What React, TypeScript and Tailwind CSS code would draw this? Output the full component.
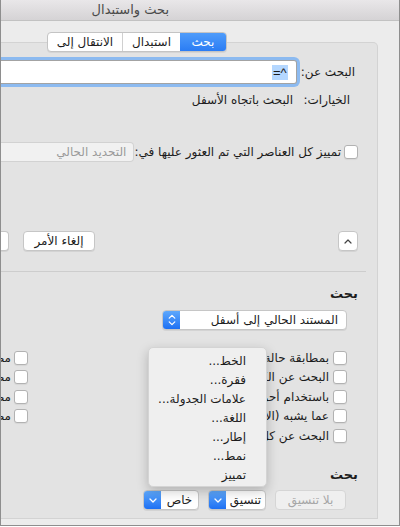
import React from 'react';

const ChevronDown = () => (
  <svg width="8" height="5" viewBox="0 0 8 5">
    <path d="M1 1l3 3 3-3" fill="none" stroke="#fff" strokeWidth="1.3" strokeLinecap="round" strokeLinejoin="round" />
  </svg>
);

const Stepper = () => (
  <svg width="8" height="12" viewBox="0 0 8 12">
    <path d="M1.2 4.2L4 1.4l2.8 2.8M1.2 7.8L4 10.6l2.8-2.8" fill="none" stroke="#fff" strokeWidth="1.2" strokeLinecap="round" strokeLinejoin="round" />
  </svg>
);

const Check = () => (
  <span className="w-[14px] h-[14px] shrink-0 rounded-[3px] border border-[#b2b2b2] bg-white shadow-[0_1px_1px_rgba(0,0,0,0.06)]" />
);

const btn = 'h-[20px] rounded-[4px] border border-[#c6c6c6] bg-white shadow-[0_1px_0_rgba(0,0,0,0.07)] flex items-center justify-center shrink-0';

interface SplitProps {
  label: string;
  width: string;
}

const SplitPopup: React.FC<SplitProps> = ({ label, width }) => (
  <div className={`${btn} ${width} overflow-hidden`}>
    <span className="flex-1 flex items-center justify-center">{label}</span>
    <span className="w-[17px] h-full bg-linear-to-b from-[#5ea8fc] to-[#1d70f3] flex items-center justify-center">
      <ChevronDown />
    </span>
  </div>
);

const rightOptions = [
  'بمطابقة حالة الأحرف',
  'البحث عن الكلمات الكاملة فقط',
  'باستخدام أحرف البدل',
  'عما يشبه (الانجليزية)',
  'البحث عن كل أشكال الكلمة (الانجليزية)',
];

const leftOptions = ['مطابقة البادئة', 'مطابقة اللاحقة', 'مطابقة علامات الترقيم', 'مطابقة المسافات'];

const menuItems = ['الخط...', 'فقرة...', 'علامات الجدولة...', 'اللغة...', 'إطار...', 'نمط...', 'تمييز'];

export default function App() {
  return (
    <div
      dir="rtl"
      className="relative w-[400px] h-[526px] overflow-hidden bg-[#ececec] border-x border-b border-[#8e8e8e] font-['DejaVu_Sans',sans-serif] text-[12px] text-[#1c1c1c]"
    >
      {/* title bar */}
      <div className="h-[21px] border-b border-[#c2c2c2] bg-linear-to-b from-[#e9e7e9] to-[#d5d3d5] flex items-center pr-[230px] text-[13px] text-[#4a4a4a] whitespace-nowrap">
        بحث واستبدال
      </div>

      {/* tabs */}
      <div className="relative z-10 mt-[11px] mr-[172px] flex h-[20px] w-fit rounded-[4px] border border-[#c4c4c4] bg-white shadow-[0_1px_0_rgba(0,0,0,0.06)] overflow-hidden">
        <span className="w-[46px] flex items-center justify-center bg-linear-to-b from-[#4f9cfa] to-[#2a7cf4] text-white">بحث</span>
        <span className="w-[58px] flex items-center justify-center border-l border-[#d0d0d0]">استبدال</span>
        <span className="w-[74px] flex items-center justify-center">الانتقال إلى</span>
      </div>

      {/* panel */}
      <div className="-mt-[10px] mr-[21px] h-[477px] rounded-tr-[5px] border-t border-r border-b border-[#d3d3d3] bg-[#e3e3e3] pt-[17px] flex flex-col">
        {/* find what */}
        <div className="flex items-center h-[24px] pr-[19px]">
          <span className="shrink-0 pr-[3px] pl-[4px] whitespace-nowrap">البحث عن:</span>
          <div className="flex-1 h-[24px] bg-white border border-l-0 border-[#a3a3a3] rounded-r-[3px] ring-3 ring-[#8cbaf0] flex items-center pr-[8px]">
            <span className="bg-[#b4d7ff] px-[1px] leading-[15px] font-['Liberation_Sans',sans-serif] text-[13px]">^=</span>
          </div>
        </div>

        {/* options */}
        <div className="flex items-center h-[16px] mt-[8px] pr-[19px] whitespace-nowrap">
          <span className="w-[65px] shrink-0 pr-[8px]">الخيارات:</span>
          <span>البحث باتجاه الأسفل</span>
        </div>

        {/* highlight all */}
        <div className="flex items-center h-[20px] mt-[34px] pr-[19px]">
          <Check />
          <span className="flex-1 pr-[3px] whitespace-nowrap">تمييز كل العناصر التي تم العثور عليها في:</span>
          <div className="w-[136px] h-[20px] shrink-0 rounded-r-[4px] border border-l-0 border-[#d2d2d2] bg-[#f1f1f1] flex items-center pr-[7px] text-[#9a9a9a] whitespace-nowrap">
            التحديد الحالي
          </div>
        </div>

        {/* buttons */}
        <div className="flex items-center h-[20px] mt-[69px] pr-[19px]">
          <div className={`${btn} w-[20px]`}>
            <svg width="8" height="5" viewBox="0 0 8 5">
              <path d="M1 4l3-3 3 3" fill="none" stroke="#444" strokeWidth="1.2" strokeLinecap="round" strokeLinejoin="round" />
            </svg>
          </div>
          <div className="flex-1" />
          <div className={`${btn} w-[72px] whitespace-nowrap`}>إلغاء الأمر</div>
          <div className={`${btn} w-[8px] ml-0 mr-[14px] rounded-l-none border-l-0`} />
        </div>

        {/* separator */}
        <div className="h-px bg-[#cdcdcd] mt-[20px] mr-[11px]" />

        <div className="h-[16px] mt-[14px] pr-[19px] font-bold text-[13px] leading-[16px]">بحث</div>

        <div className="mt-[8px] mr-[30px] w-[185px] h-[20px] rounded-[4px] border border-[#c6c6c6] bg-white shadow-[0_1px_0_rgba(0,0,0,0.07)] flex overflow-hidden">
          <span className="flex-1 flex items-center pr-[8px] whitespace-nowrap">المستند الحالي إلى أسفل</span>
          <span className="w-[17px] bg-linear-to-b from-[#5ea8fc] to-[#1d70f3] flex items-center justify-center">
            <Stepper />
          </span>
        </div>

        {/* option checkboxes (right column runs under the open menu) */}
        <div className="flex mt-[18px] mr-[30px]">
          <div className="w-[81px] shrink-0 overflow-hidden flex flex-col">
            {rightOptions.map((o) => (
              <div key={o} className="h-[19.5px] flex items-center gap-[4px] whitespace-nowrap">
                <Check />
                <span>{o}</span>
              </div>
            ))}
          </div>
          <div className="flex-1" />
          <div className="w-[27px] shrink-0 flex flex-col">
            {leftOptions.map((o) => (
              <div key={o} className="h-[19.5px] flex items-center gap-[3px] whitespace-nowrap">
                <Check />
                <span>{o}</span>
              </div>
            ))}
          </div>
        </div>

        <div className="h-[16px] mt-[21.5px] pr-[19px] font-bold text-[13px] leading-[16px]">بحث</div>

        {/* format buttons */}
        <div className="flex items-center gap-[9px] mt-[7px] mr-[31px]">
          <div className="h-[20px] w-[71px] rounded-[4px] border border-[#d5d5d5] bg-[#efefef] flex items-center justify-center text-[#a6a6a6] whitespace-nowrap">
            بلا تنسيق
          </div>
          <SplitPopup label="تنسيق" width="w-[58px]" />
          <SplitPopup label="خاص" width="w-[56px]" />
        </div>
      </div>

      {/* format menu */}
      <div className="absolute left-[147px] top-[347px] w-[119px] h-[140px] rounded-[5px] border border-[#d4d4d4] bg-[#efefef] shadow-[0_4px_12px_rgba(0,0,0,0.22)] pt-[3px] pr-[20px] flex flex-col">
        {menuItems.map((m) => (
          <div key={m} className="h-[19px] flex items-center whitespace-nowrap">
            {m}
          </div>
        ))}
      </div>
    </div>
  );
}
